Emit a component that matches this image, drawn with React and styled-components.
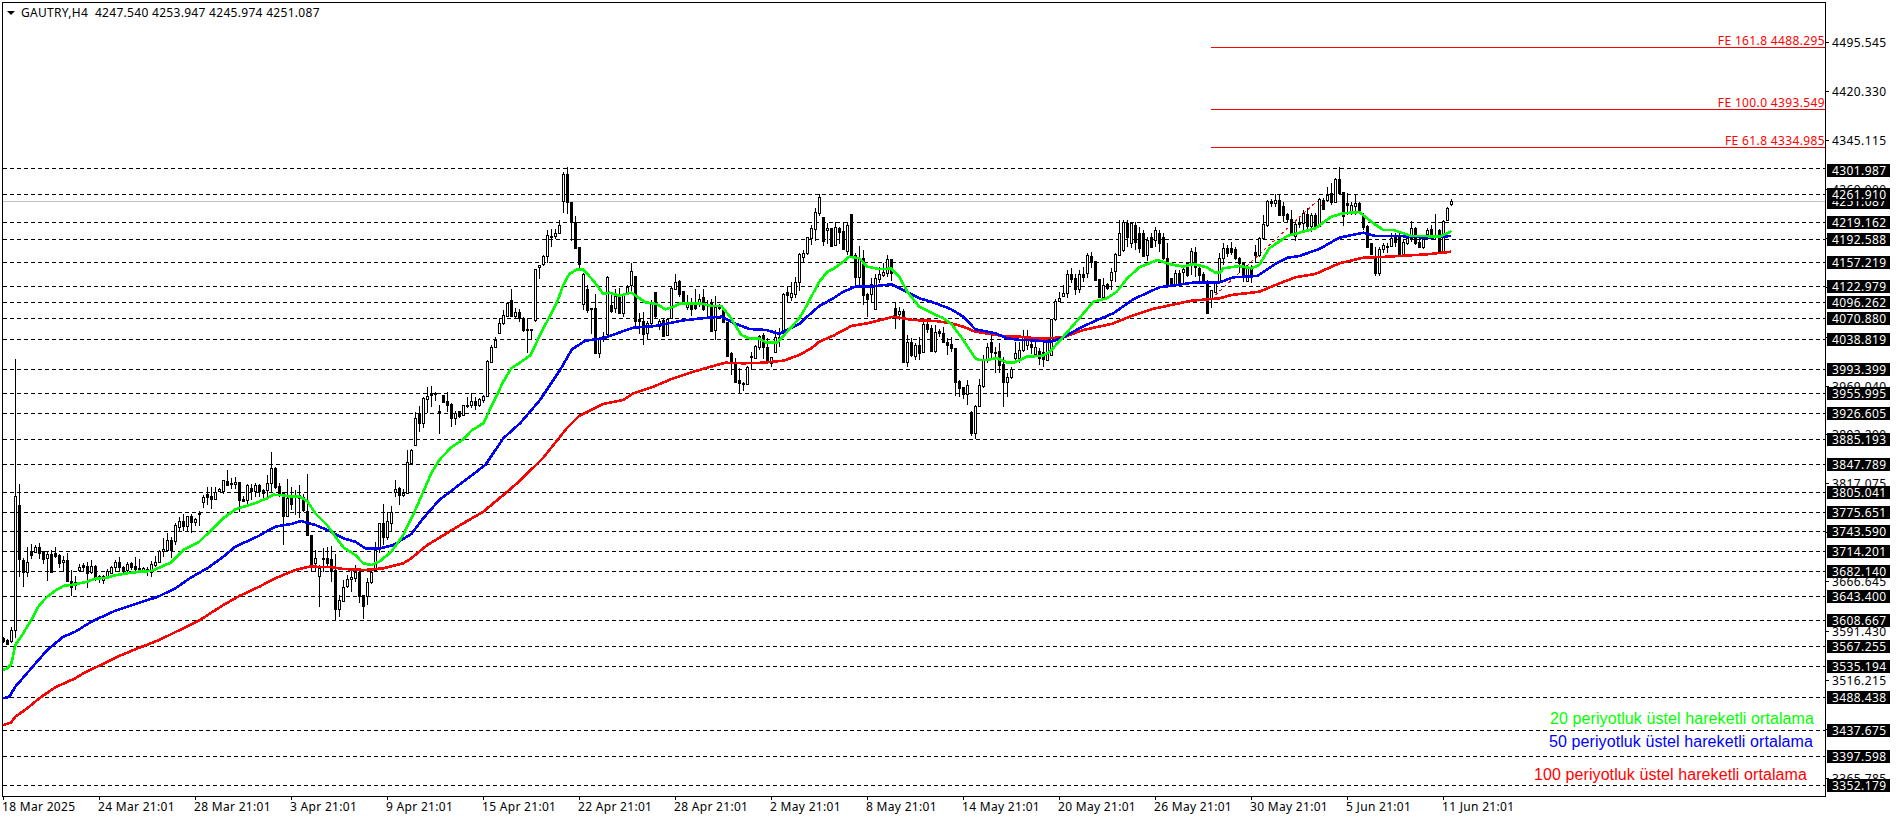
import React from 'react';
import styled, { createGlobalStyle } from 'styled-components';

const GlobalStyle = createGlobalStyle`
    html, body {
        margin: 0;
        padding: 0;
        background: #ffffff;
    }
`;

const Page = styled.div`
    width: 1896px;
    height: 820px;
    box-sizing: border-box;
    padding: 2px 0 0 2px;
    overflow: hidden;
    display: grid;
    grid-template-columns: 1824px 1fr;
    grid-template-rows: 795px 1fr;
    background: #ffffff;
    color: #000000;
    font-family: "Noto Sans", "Liberation Sans", sans-serif;
    font-size: 12px;
`;

const Plot = styled.div`
    position: relative;
    box-sizing: border-box;
    border: 1px solid #000000;
    overflow: hidden;
`;

const ChartSvg = styled.svg`
    display: block;
`;

const Header = styled.div`
    position: absolute;
    left: 4px;
    top: 2px;
    display: flex;
    align-items: center;
    gap: 6px;
    line-height: 16px;
    white-space: pre;
    letter-spacing: 0.3px;
`;

const Arrow = styled.span`
    width: 0;
    height: 0;
    border-left: 4px solid transparent;
    border-right: 4px solid transparent;
    border-top: 4px solid #000000;
`;

const FeLabel = styled.div`
    position: absolute;
    right: 0;
    line-height: 12px;
    color: #ff0000;
    white-space: nowrap;
    letter-spacing: 0.36px;
`;

const LegendStack = styled.div`
    position: absolute;
    right: 0;
    bottom: 12px;
    display: flex;
    flex-direction: column;
    align-items: flex-end;
`;

const Legend = styled.div`
    margin-right: ${props => props.$right}px;
    margin-top: ${props => props.$gap}px;
    font-family: "Liberation Sans", Arial, sans-serif;
    font-size: 16px;
    letter-spacing: 0.09px;
    line-height: 18px;
    color: ${props => props.$color};
    white-space: nowrap;
`;

const PriceAxis = styled.div`
    position: relative;
`;

const AxisTick = styled.div`
    position: absolute;
    left: 0;
    height: 14px;
    line-height: 14px;
    padding-left: 6px;
    letter-spacing: 0.4px;

    &::before {
        content: '';
        position: absolute;
        left: 0;
        top: 6px;
        width: 3px;
        height: 1px;
        background: #000000;
    }
`;

const LevelLabel = styled.div`
    position: absolute;
    left: 1px;
    width: 63px;
    height: ${props => props.$tall ? 14 : 13}px;
    box-sizing: border-box;
    padding-left: 5px;
    line-height: 14px;
    letter-spacing: 0.4px;
    background: #000000;
    color: #ffffff;
`;

const TimeAxis = styled.div`
    grid-column: 1 / span 2;
    display: flex;
    padding-left: 1px;
`;

const TimeCell = styled.div`
    position: relative;
    flex: 0 0 96px;
    padding-top: 2px;
    line-height: 16px;
    white-space: nowrap;
    letter-spacing: 0.3px;
    text-indent: -1px;

    &::before {
        content: '';
        position: absolute;
        left: 0;
        top: 0;
        width: 1px;
        height: 3px;
        background: #000000;
    }
`;

// plot box sits at page (3,3), the data below is in page pixels
const PLOT_ORIGIN = 3;

const LEVELS = [
    [4301.987, 168, 164], [4261.910, 194, 188], [4219.162, 222], [4192.588, 239], [4157.219, 262], [4122.979, 286],
    [4096.262, 302], [4070.880, 318], [4038.819, 339], [3993.399, 369], [3955.995, 393],
    [3926.605, 413], [3885.193, 439], [3847.789, 464], [3805.041, 492], [3775.651, 512],
    [3743.590, 531], [3714.201, 551], [3682.140, 571], [3643.400, 596], [3608.667, 620],
    [3567.255, 646], [3535.194, 666], [3488.438, 697], [3437.675, 730], [3397.598, 756],
    [3352.179, 785],
];

const TICKS = [
    ['4495.545', 42], ['4420.330', 91], ['4345.115', 140], ['4269.900', 189], ['4194.685', 238],
    ['4119.470', 287], ['4044.255', 337], ['3969.040', 386], ['3892.290', 434], ['3817.075', 483],
    ['3741.860', 532], ['3666.645', 581], ['3591.430', 631], ['3516.215', 680], ['3441.000', 729],
    ['3365.785', 778],
];

const FE = [
    ['FE 161.8 4488.295', 47],
    ['FE 100.0 4393.549', 109],
    ['FE 61.8 4334.985', 147],
];

const DATES = [
    '18 Mar 2025', '24 Mar 21:01', '28 Mar 21:01', '3 Apr 21:01', '9 Apr 21:01', '15 Apr 21:01',
    '22 Apr 21:01', '28 Apr 21:01', '2 May 21:01', '8 May 21:01', '14 May 21:01', '20 May 21:01',
    '26 May 21:01', '30 May 21:01', '5 Jun 21:01', '11 Jun 21:01',
];

// candles read off the chart: high,bodyTop,bodyBottom,low,kind per bar
const CANDLE_ROWS = [
    [0, 340, `890,895,903,908b 897,901,911,915b 862,871,902,908w 57,469,870,895w 432,495,658,712b 655,660,697,740b
    622,667,697,710w 613,633,645,656b 615,622,637,640w 610,622,638,656b 633,634,656,673b 635,643,655,722w
    630,642,695,695b 622,640,647,653b 643,646,668,684b 648,660,667,695w 640,660,722,722b 690,722,742,768b
    708,727,735,749w 672,680,690,695w 670,676,680,695b 665,678,698,745b 660,679,697,702w 676,678,713,722b
    705,709,717,728w 705,707,720,731w 688,694,708,712w 677,680,698,702w 660,665,680,695w 652,666,682,695b
    678,681,692,698b 665,671,690,695w 665,670,680,690b 652,678,688,695b 656,685,692,697b 680,684,692,697w
    682,686,690,708b 662,672,695,710w 648,667,675,680w 630,632,667,670w 595,628,634,650w 580,600,630,632w
    592,600,630,654b 548,555,602,615w 530,544,560,575w 523,544,558,573b 528,529,557,573w 523,528,547,578b
    535,538,547,557w 512,520,522,557b 465,472,486,503w 440,462,470,495b 442,468,478,506b 440,456,477,480w
    445,447,454,456w 420,421,452,463w 390,423,435,438b 415,430,433,447b 410,427,433,447w 425,427,480,517b
    468,478,483,486b 432,435,480,494w 433,443,454,480b`],
    [63, 340, `430,435,452,470w 432,435,452,470b 448,451,458,480b 405,430,450,470w 337,385,430,455w 380,385,442,446b
    430,438,458,470b 455,456,527,614b 418,475,527,530w 440,475,492,510b 450,468,470,525b 436,465,475,535b
    462,472,510,515b 403,512,586,586b 586,586,680,695b 630,655,670,695w 675,685,707,800w 625,655,657,695b
    620,653,668,680b 618,658,692,725b 643,690,808,840b 765,780,806,830w 720,742,782,785w 705,717,738,745w
    690,712,718,755w 675,695,713,725w 690,695,768,790b 765,766,797,838b 715,725,768,795w 690,695,725,733w
    607,630,690,692w 548,550,620,640w 492,549,592,615b 515,542,590,600w 498,517,550,575w 420,446,456,470w
    440,445,465,495b 447,458,465,472w 330,365,458,458w 328,330,368,372w 215,233,315,318w 198,218,248,275b
    170,175,248,265w 140,167,177,218w 138,160,165,200b 155,160,163,182b 195,213,215,282b 165,166,185,190b
    157,183,195,215b 190,193,233,260b 212,218,233,255w 213,214,228,235b 195,195,224,228w 172,194,197,205b
    160,184,194,205w 172,184,194,210b 175,178,194,200w 165,168,179,190w 60,62,168,170w 15,22,65,68w
    -10,0,22,25w`],
    [124, 150, `505,518,550,552w 480,495,518,525w 458,458,497,497w 418,450,498,500b 475,487,498,503w 478,487,505,515b
    500,505,540,545b 505,538,541,608b 538,538,541,568b 357,358,510,515w 345,345,350,388w 315,318,342,347w
    240,256,319,338w 237,257,259,292b 237,248,257,268w 210,226,248,250w 65,72,152,190w 52,72,157,192b
    155,157,216,272b 198,216,293,295b 290,292,342,360b 370,373,462,480w 405,418,480,490b 475,475,478,552b
    433,475,610,612b 560,565,610,625w 545,557,567,575w 378,380,553,555w 430,465,484,488b 418,437,475,488w
    415,440,488,490b 432,435,488,500w 405,411,432,435w 340,362,405,430w 378,378,513,535b 490,508,512,552b
    485,513,553,585b 512,518,550,570w 450,460,518,530w 425,427,498,505b 508,512,527,540w 505,510,557,558b
    505,507,556,557w 410,415,505,508w 372,395,417,420w 390,392,432,440b 423,424,462,465b 435,458,470,480w
    445,455,478,498b 417,458,475,480b 432,448,461,470w 418,442,478,482b 450,462,465,500b 447,460,542,545b
    438,470,541,570w 462,465,475,480b 470,480,517,520b 515,517,618,620b 605,610,635,675b 625,643,695,700b
    655,690,698,730b 695,698,700,722b 648,650,702,703w 605,618,622,660b 585,587,625,625w 555,557,590,600w
    550,556,592,628b 565,592,635,640b 620,622,638,650w 540,562,605,610w 535,560,562,590b`],
    [195, 170, `370,372,490,495w 350,365,375,395b 335,370,380,392w 320,335,372,385w 250,252,335,362w 240,250,260,275w
    200,202,250,255w 165,175,204,225w 115,127,177,212w 73,82,128,138w 140,142,212,228b 160,175,181,222w
    175,175,227,227b 157,172,225,228w 170,175,185,222b 157,183,236,238b 155,165,242,255w 132,132,258,260b
    248,256,320,350b 228,265,320,345w 240,265,375,405b 370,372,388,440b 325,343,372,400w 312,325,418,420w
    290,312,326,340w 280,305,316,320w 255,268,310,320w 268,268,310,332b 395,415,435,478b 410,423,433,450w
    418,423,576,580b 495,517,575,590w 505,517,556,562b 518,525,558,570w 500,525,548,570b 450,463,545,548w
    450,461,476,488b 465,475,543,545b 465,487,543,548w 478,484,488,500b 470,490,515,520b 505,515,525,555b
    500,522,535,545b 533,535,635,678b 630,632,654,680b 652,652,672,688b 630,646,672,705w 722,725,790,798b
    705,707,788,808w 628,646,707,712w 555,568,648,655w 520,532,568,578w 495,517,545,570b 530,545,547,610b
    518,543,585,610b 560,582,635,712b 610,622,635,680w 590,596,622,628w 515,550,565,575w 515,540,565,580w`],
    [255, 250, `240,262,300,305w 240,262,285,300w 260,282,292,312b 270,290,313,320w 295,302,325,345b 275,305,328,352b
    270,272,330,332w 207,208,315,318w 148,152,208,212w 125,145,153,156w 105,130,137,142w 60,72,130,145w
    55,72,87,100b 72,85,118,135b 60,72,118,130w 50,72,82,95b 10,15,70,85w 5,18,37,55b 32,32,90,93b 87,87,140,142b
    85,105,140,142w 100,102,115,120b 55,65,90,120w 10,12,62,95w -90,-50,15,17w -90,-85,0,5w -90,-80,-40,-10b
    -85,-80,-20,-5w -85,-75,-25,0b -70,-50,-5,10b -60,-50,18,22b -40,-30,15,32w -50,-40,-10,-5b -70,-60,-30,-10w
    -60,-50,-20,5b -50,-40,25,30b -20,25,105,108b 85,85,105,110b 60,68,105,110w 60,70,105,108b 45,58,65,100w
    35,40,75,80b -5,3,45,75w -10,5,50,80b 50,55,75,100b`],
    [300, 150, `365,372,390,395b 390,400,490,492b 420,420,445,475w 395,400,425,430w 310,325,392,395w 280,295,325,345w
    285,295,310,320b 275,295,305,315b 290,298,325,330b 320,325,340,370b 340,340,380,395b 345,350,392,395w
    345,350,375,400b 285,305,315,340b 262,265,315,320w 195,222,265,270w 150,153,225,230w 148,153,158,172b
    133,150,158,170w 133,150,195,196b 155,168,195,215b 190,193,207,215b 180,208,255,258b 215,222,258,272w
    205,218,222,235b 180,188,220,240w 175,192,228,245b 190,195,228,245w 190,195,228,235b 143,148,228,230w
    145,150,178,180b 110,135,150,155w 100,130,155,165b 85,88,155,158w 52,88,130,135b 125,127,197,228b
    130,160,165,195b 155,165,190,195w 133,160,168,195w 155,158,185,190b 190,195,232,240b 225,228,290,295b
    278,280,312,315b 292,320,370,378b 290,298,370,378w 280,285,297,308w 280,287,290,310b 250,265,288,292w
    250,262,275,290b 245,262,312,315b 270,275,312,318w 260,265,278,285w 212,235,265,275w 230,235,280,285b
    265,275,290,295b 262,268,292,298w 235,240,252,255w 225,238,252,260b 192,258,262,270b 238,240,302,305b
    210,212,302,305w 170,175,210,212w 147,153,163,168w`],
];

const parseCandles = rows => {
    const out = [];
    rows.forEach(([start, y0, text]) => {
        text.trim().split(/\s+/).forEach((token, j) => {
            const kind = token.slice(-1);
            const [hi, top, bot, lo] = token.slice(0, -1).split(',').map(n => y0 + Number(n) / 3);
            out.push({ i: start + j, hi, top, bot, lo, bull: kind === 'w' });
        });
    });
    return out;
};

const CANDLES = parseCandles(CANDLE_ROWS);

// moving averages, stitched from several crops, x must only grow
const stitch = parts => {
    const pts = [];
    let last = -1;
    parts.forEach(([x0, y0, text]) => {
        text.trim().split(/\s+/).forEach(pair => {
            const [zx, zy] = pair.split(',').map(Number);
            const x = x0 + zx / 3;
            if (x > last) {
                pts.push(`${x.toFixed(1)},${(y0 + zy / 3).toFixed(1)}`);
                last = x;
            }
        });
    });
    return pts.join(' ');
};

const GREEN = stitch([
    [0, 340, `10,990 22,985 34,972 46,915 70,880 94,840 118,795 142,770 166,752 190,738 226,733 262,725 286,716 322,713
    346,706 382,700 418,695 454,693 478,683 514,667 550,630 598,605 634,570 670,535 706,508 742,497 778,485`],
    [250, 340, `30,483 52,475 70,464 100,466 124,470 148,470 172,483 196,520 232,556 256,590 280,622 316,645 340,670 364,675
    388,665 424,635 460,585 496,510 520,455 544,400 568,360 604,322 640,298 664,272 700,250 724,200 760,125 784,85 810,68`],
    [500, 150, `92,615 120,555 172,455 190,405 208,372 232,358 250,358 280,392 310,432 328,428 358,437 394,428 436,457 470,462
    496,478 520,470 540,460 600,460 634,468 664,468 690,500 724,555 748,565 775,565 800,578 832,578 862,545 898,505`],
    [780, 170, `70,425 118,335 142,305 160,297 190,275 208,260 238,265 262,290 298,297 334,296 358,320 382,365 418,410 454,428
    490,445 514,462 550,510 586,565 598,570 622,570 650,564 682,578 700,578 720,570`],
    [900, 250, `380,320 430,317 450,305 490,260 538,205 580,155 620,145 650,125 682,85 718,52 772,30 808,42 850,50 880,42 920,52
    946,68 960,68`],
    [1200, 150, `70,355 118,348 154,355 178,345 208,295 262,258 298,248 346,235 394,200 430,190 478,186 514,215 550,240 580,240
    634,258 670,258 718,260 742,250 754,243`],
]);

const BLUE = stitch([
    [0, 340, `10,1075 28,1070 46,1040 94,985 142,930 190,890 226,875 274,845 346,812 418,788 474,770 526,745 574,712 622,685
    670,650 706,620 778,587`],
    [250, 340, `30,585 76,560 124,552 154,543 196,555 244,575 280,595 316,605 346,625 388,626 430,615 484,582 520,535 568,480
    640,425 706,375 760,295 810,250`],
    [500, 150, `120,750 180,660 216,598 256,572 310,565 352,550 400,533 466,528 544,512 604,505 664,500 700,518 748,537 800,540
    838,552 898,522`],
    [780, 170, `76,445 118,408 160,385 190,365 226,350 280,349 334,343 370,360 418,385 454,395 514,418 550,440 586,478 646,490
    682,505 720,510`],
    [900, 250, `382,270 454,275 490,262 538,235 580,215 640,190 700,148 778,112 830,105 886,97 960,97`],
    [1200, 150, `100,382 172,378 232,338 262,323 298,318 358,297 418,263 490,248 526,258 598,258 682,263 754,258`],
]);

const RED = stitch([
    [0, 620, `10,315 34,307 46,290 82,265 118,235 166,202 226,175 250,160 298,137 358,108 406,88 478,60 580,10 600,0`],
    [0, 340, `670,795 718,768 778,740`],
    [250, 340, `76,715 136,690 178,680 244,681 280,687 346,690 400,685 460,670 484,655 532,615 598,575 640,550 700,515 760,465
    810,422`],
    [0, 0, `1629,1374 1701,1284 1737,1248 1809,1212`],
    [500, 150, `370,750 400,730 460,710 520,685 580,665 640,648 676,638 730,640 790,638 850,632 898,615`],
    [780, 170, `94,535 118,515 160,497 214,468 262,460 340,440 400,450 466,453 514,460 550,470 586,485 670,498 720,500`],
    [900, 250, `418,266 490,262 550,240 634,222 694,198 754,178 874,152 960,145`],
    [1200, 150, `94,435 178,425 232,403 286,382 346,372 418,340 490,323 562,320 682,313 754,305`],
]);

const Candle = ({ i, hi, top, bot, lo, bull }) => {
    const x = 3 + 4 * i;
    const t = Math.round(top);
    const h = Math.max(1, Math.round(bot) - t);
    return (
        <g>
            <rect x={x} y={Math.round(hi)} width="1" height={Math.max(1, Math.round(lo) - Math.round(hi))} fill="#000" />
            <rect x={x - 1} y={t} width="3" height={h + 1} fill="#000" />
            {bull && h > 1 && <rect x={x} y={t + 1} width="1" height={h - 1} fill="#fff" />}
        </g>
    );
};

const Chart = () => (
    <ChartSvg width="1822" height="793" viewBox="3 3 1822 793" shapeRendering="crispEdges">
        <line x1="3" x2="1825" y1="201.5" y2="201.5" stroke="#c0c0c0" />
        {LEVELS.map(([price, y]) => (
            <line key={price} x1="3" x2="1825" y1={y + 0.5} y2={y + 0.5} stroke="#000" strokeDasharray="4 3" />
        ))}
        {FE.map(([text, y]) => (
            <line key={text} x1="1211" x2="1825" y1={y + 0.5} y2={y + 0.5} stroke="#ff0000" />
        ))}
        <polyline points="1211,299 1317,201 1324,208" fill="none" stroke="#ff0000" strokeDasharray="3 3" />
        {CANDLES.map(c => <Candle key={c.i} {...c} />)}
        <polyline points={RED} fill="none" stroke="#ff0000" strokeWidth="2.6" />
        <polyline points={BLUE} fill="none" stroke="#0000ff" strokeWidth="2.6" />
        <polyline points={GREEN} fill="none" stroke="#00ff00" strokeWidth="2.6" />
    </ChartSvg>
);

export default function App() {
    return (
        <>
            <GlobalStyle />
            <Page>
                <Plot>
                    <Chart />
                    <Header>
                        <Arrow />
                        <span>GAUTRY,H4  4247.540 4253.947 4245.974 4251.087</span>
                    </Header>
                    {FE.map(([text, y]) => (
                        <FeLabel key={text} style={{ top: y - PLOT_ORIGIN - 12 }}>{text}</FeLabel>
                    ))}
                    <LegendStack>
                        <Legend $color="#00ff00" $right={11} $gap={0}>20 periyotluk üstel hareketli ortalama</Legend>
                        <Legend $color="#0000ff" $right={12} $gap={5}>50 periyotluk üstel hareketli ortalama</Legend>
                        <Legend $color="#ff0000" $right={18} $gap={15}>100 periyotluk üstel hareketli ortalama</Legend>
                    </LegendStack>
                </Plot>
                <PriceAxis>
                    {TICKS.map(([text, y]) => (
                        <AxisTick key={text} style={{ top: y - 2 - 6 }}>{text}</AxisTick>
                    ))}
                    <LevelLabel $tall style={{ top: 195 - 2 }}>4251.087</LevelLabel>
                    {LEVELS.map(([price, y, labelTop]) => (
                        <LevelLabel key={price} style={{ top: (labelTop || y - 6) - 2 }}>{price.toFixed(3)}</LevelLabel>
                    ))}
                </PriceAxis>
                <TimeAxis>
                    {DATES.map(date => <TimeCell key={date}>{date}</TimeCell>)}
                </TimeAxis>
            </Page>
        </>
    );
}
